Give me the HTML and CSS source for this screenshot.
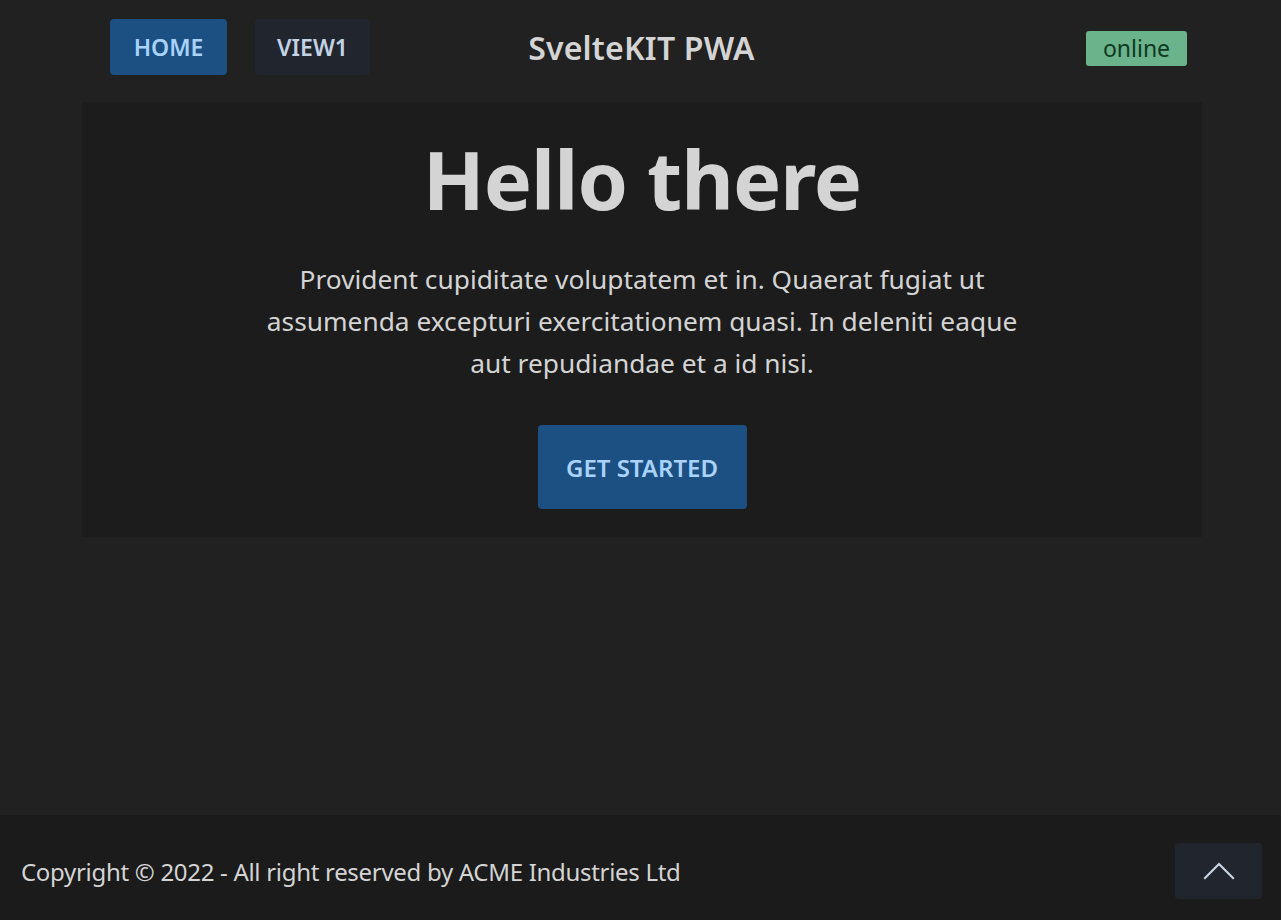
FILE: index.html
```html
<!DOCTYPE html>
<html lang="en">
<head>
<meta charset="utf-8">
<title>SvelteKIT PWA</title>
<link rel="stylesheet" href="styles.css">
</head>
<body>
<div class="page">
  <header class="navbar">
    <nav class="nav-left">
      <a class="btn btn-primary nav-btn" href="#">HOME</a>
      <a class="btn btn-ghost nav-btn" href="#">VIEW1</a>
    </nav>
    <div class="brand">SvelteKIT PWA</div>
    <div class="nav-right"><span class="badge">online</span></div>
  </header>
  <main class="main">
    <section class="hero">
      <h1 class="hero-title">Hello there</h1>
      <p class="hero-text">Provident cupiditate voluptatem et in. Quaerat fugiat ut assumenda excepturi exercitationem quasi. In deleniti eaque aut repudiandae et a id nisi.</p>
      <a class="btn btn-primary cta" href="#">GET STARTED</a>
    </section>
  </main>
  <footer class="footer">
    <p class="copy">Copyright © 2022 - All right reserved by ACME Industries Ltd</p>
    <a class="btn btn-ghost top-btn" href="#" aria-label="Back to top">
      <svg width="32" height="18" viewBox="0 0 32 18" fill="none" stroke="#c9d3e0" stroke-width="2.2" stroke-linecap="square"><path d="M2 16 L16 2 L30 16"/></svg>
    </a>
  </footer>
</div>
</body>
</html>
```
FILE: styles.css
```css
* { box-sizing: border-box; }
html, body { margin: 0; height: 100%; }
body {
  background: #212121;
  color: #d4d4d4;
  font-family: "Noto Sans", "Open Sans", sans-serif;
}
.page {
  min-height: 100vh;
  display: flex;
  flex-direction: column;
}
.btn {
  display: inline-flex;
  align-items: center;
  justify-content: center;
  text-decoration: none;
  border-radius: 4px;
  font-weight: 600;
}
.btn-primary { background: #1c5083; color: #a9d3fb; }
.btn-ghost { background: #21262e; color: #c4d2e6; }

.navbar {
  display: grid;
  grid-template-columns: 1fr auto 1fr;
  align-items: center;
  align-content: start;
  padding: 19px 94px 0 110px;
  height: 102px;
}
.nav-left { display: flex; gap: 28px; }
.nav-btn { height: 56px; font-size: 23px; letter-spacing: 0; }
.nav-btn:first-child { width: 117px; }
.nav-btn:last-child { width: 115px; }
.brand {
  font-size: 32px;
  font-weight: 600;
  color: #d4d4d4;
  letter-spacing: 0.2px;
  transform: translateX(-7px);
}
.nav-right { display: flex; justify-content: flex-end; padding-top: 2px; }
.badge {
  background: #6bb38a;
  color: #0f3a22;
  font-size: 23px;
  height: 35px;
  width: 101px;
  display: inline-flex;
  align-items: center;
  justify-content: center;
  border-radius: 3px;
}

.main { flex: 1; padding: 0 79px 0 82px; }
.hero {
  background: #1c1c1c;
  display: flex;
  flex-direction: column;
  align-items: center;
  text-align: center;
  padding: 24px 0 28px;
}
.hero-title {
  margin: 0;
  font-size: 81px;
  font-weight: 700;
  line-height: 106px;
  letter-spacing: -1px;
  color: #d4d4d4;
}
.hero-text {
  margin: 26px 0 0;
  max-width: 760px;
  font-size: 26.3px;
  line-height: 42px;
  letter-spacing: 0;
}
.cta {
  margin-top: 41px;
  width: 209px;
  height: 84px;
  font-size: 24px;
  letter-spacing: 0;
}

.footer {
  background: #1b1b1b;
  height: 105px;
  display: flex;
  align-items: center;
  justify-content: space-between;
  padding: 7px 19px 0 21px;
}
.copy {
  margin: 0;
  font-size: 24px;
  letter-spacing: -0.3px;
}
.top-btn { width: 87px; height: 56px; }
```
